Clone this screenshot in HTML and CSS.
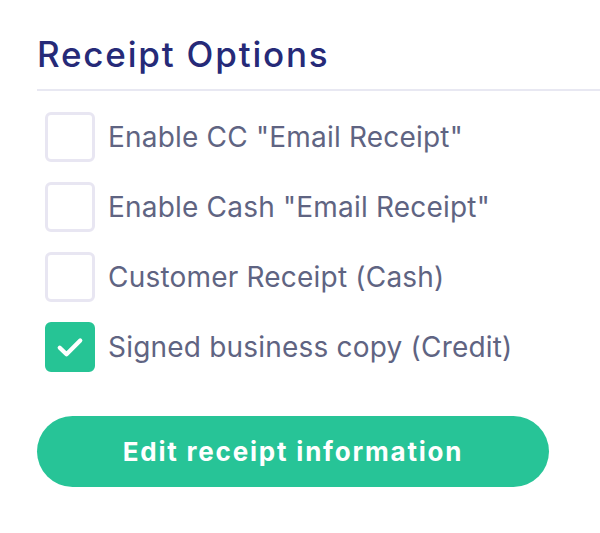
FILE: index.html
```html
<!DOCTYPE html>
<html lang="en">
<head>
    <meta charset="UTF-8">
    <meta name="viewport" content="width=device-width, initial-scale=1.0">
    <title>Receipt Options</title>
    <link rel="stylesheet" href="styles.css">
</head>
<body>
    <div class="panel">
        <h2 class="titulo">Receipt Options</h2>
        <div class="opciones">
            <label class="opcion">
                <span class="caja"></span>
                <span class="texto">Enable CC "Email Receipt"</span>
            </label>
            <label class="opcion">
                <span class="caja"></span>
                <span class="texto">Enable Cash "Email Receipt"</span>
            </label>
            <label class="opcion">
                <span class="caja"></span>
                <span class="texto">Customer Receipt (Cash)</span>
            </label>
            <label class="opcion">
                <span class="caja marcada">
                    <svg width="30" height="30" viewBox="0 0 24 24"><path d="M3.8 12.6l5.4 5.2L20.2 6.8" fill="none" stroke="#fff" stroke-width="3.4" stroke-linecap="round" stroke-linejoin="round"/></svg>
                </span>
                <span class="texto">Signed business copy (Credit)</span>
            </label>
        </div>
        <button type="button" class="editar">Edit receipt information</button>
    </div>
</body>
</html>
```

FILE: styles.css
```css
body {
    margin: 0;
    background: #fff;
    font-family: Inter, "Open Sans", sans-serif;
}

.panel {
    padding: 33px 0 0 37px;
}

.titulo {
    margin: 0;
    font-size: 35px;
    line-height: 42px;
    font-weight: 500;
    letter-spacing: 1.8px;
    color: #262a78;
    padding-bottom: 14px;
    border-bottom: 2px solid #e8e8f2;
}

.opciones {
    display: flex;
    flex-direction: column;
    gap: 20px;
    padding: 21px 0 0 8px;
}

.opcion {
    display: flex;
    align-items: center;
    gap: 13px;
}

.caja {
    width: 50px;
    height: 50px;
    box-sizing: border-box;
    border: 3px solid #e8e6f2;
    border-radius: 6px;
    display: flex;
    align-items: center;
    justify-content: center;
}

.caja.marcada {
    background: #26c495;
    border-color: #26c495;
}

.texto {
    font-size: 28px;
    letter-spacing: 0.2px;
    color: #5f6482;
}

.editar {
    margin-top: 44px;
    width: 512px;
    height: 71px;
    border: none;
    border-radius: 36px;
    background: #27c497;
    color: #fff;
    font-family: inherit;
    font-size: 26px;
    font-weight: 700;
    letter-spacing: 1.8px;
}
```
